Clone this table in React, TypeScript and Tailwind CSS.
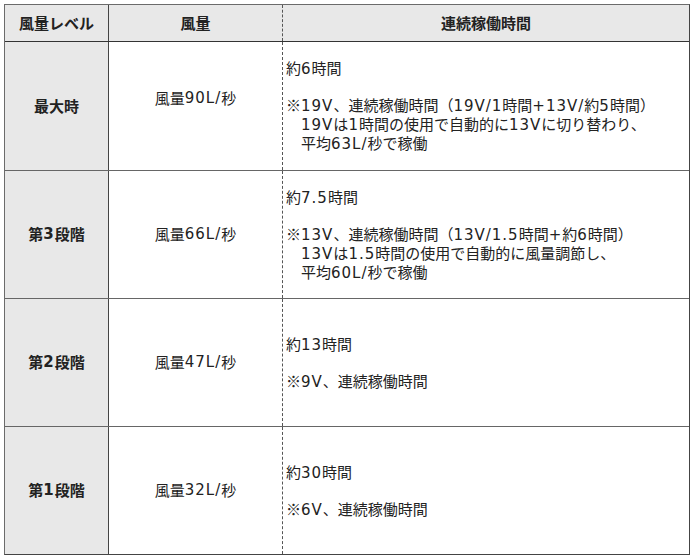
import React from "react";

const font = { fontFamily: '"Noto Sans CJK JP", "Noto Sans", sans-serif' };

function T({ text }: { text: string }) {
  const parts = text.split(/([\x21-\x7E]+)/);
  return (
    <>
      {parts.map((p, i) =>
        /^[\x21-\x7E]+$/.test(p) ? (
          <span
            key={i}
            className="tracking-[1px]"
            style={{ fontFamily: '"DejaVu Sans", "Noto Sans", sans-serif' }}
          >
            {p}
          </span>
        ) : (
          <React.Fragment key={i}>{p}</React.Fragment>
        )
      )}
    </>
  );
}

type Row = {
  label: string;
  flow: string;
  flowPad?: boolean;
  first: string;
  note: string;
  extra?: string[];
};

const rows: Row[] = [
  {
    label: "最大時",
    flow: "風量90L/秒",
    flowPad: true,
    first: "約6時間",
    note: "※19V、連続稼働時間（19V/1時間+13V/約5時間）",
    extra: ["19Vは1時間の使用で自動的に13Vに切り替わり、", "平均63L/秒で稼働"],
  },
  {
    label: "第3段階",
    flow: "風量66L/秒",
    first: "約7.5時間",
    note: "※13V、連続稼働時間（13V/1.5時間+約6時間）",
    extra: ["13Vは1.5時間の使用で自動的に風量調節し、", "平均60L/秒で稼働"],
  },
  { label: "第2段階", flow: "風量47L/秒", first: "約13時間", note: "※9V、連続稼働時間" },
  { label: "第1段階", flow: "風量32L/秒", first: "約30時間", note: "※6V、連続稼働時間" },
];

export default function App() {
  return (
    <div className="bg-white w-[695px] h-[559px] pt-[4px] pl-[4px] text-[#222]" style={font}>
      <div className="w-[686px] border border-[#6b6b6b] border-r-[#444] border-b-[#444]">
        <div className="grid grid-cols-[104px_174px_1fr] h-[37px] bg-[#e8e8e8] border-b border-[#333] text-[15px] font-bold">
          <div className="flex items-center justify-center border-r border-[#444]">風量レベル</div>
          <div className="flex items-center justify-center border-r border-dashed border-[#555]">風量</div>
          <div className="flex items-center justify-center">連続稼働時間</div>
        </div>
        {rows.map((r, i) => (
          <div
            key={r.label}
            className={`grid grid-cols-[104px_174px_1fr] h-[128px] ${i > 0 ? "border-t border-[#666]" : ""}`}
          >
            <div className="flex items-center justify-center bg-[#e8e8e8] border-r border-[#444] text-[15px] font-bold">
              <T text={r.label} />
            </div>
            <div
              className={`flex items-center justify-center border-r border-dashed border-[#555] text-[15px] ${
                r.flowPad ? "pb-[16px]" : ""
              }`}
            >
              <T text={r.flow} />
            </div>
            <div className="flex flex-col justify-center pl-[3px] text-[15px] leading-[18px]">
              <div>
                <T text={r.first} />
              </div>
              <div className="mt-[18px]">
                <T text={r.note} />
              </div>
              {r.extra && (
                <div className="pl-[1em]">
                  {r.extra.map((e) => (
                    <div key={e}>
                      <T text={e} />
                    </div>
                  ))}
                </div>
              )}
            </div>
          </div>
        ))}
      </div>
    </div>
  );
}
